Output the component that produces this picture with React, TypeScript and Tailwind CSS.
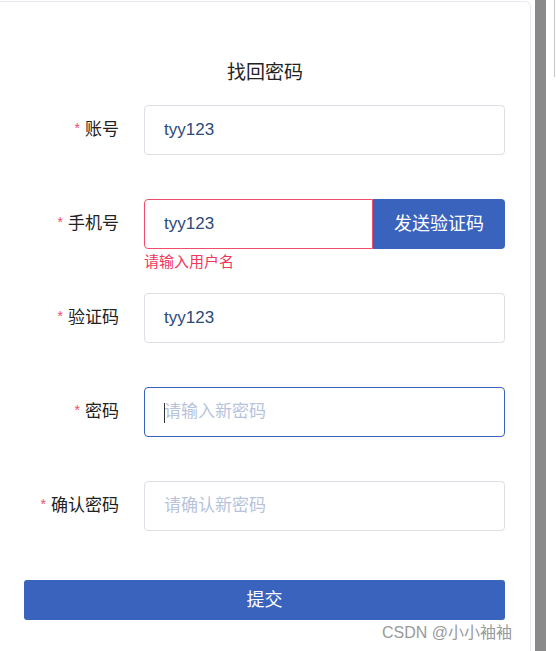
import React from 'react'

const font = { fontFamily: '"Liberation Sans", "Noto Sans CJK SC", sans-serif' }

interface FieldProps {
  label: string
  value?: string
  placeholder?: string
  state?: 'normal' | 'error' | 'focus'
  children?: React.ReactNode
  error?: string
}

const Field = ({ label, value, placeholder, state = 'normal', children, error }: FieldProps) => {
  const border =
    state === 'error' ? 'border-[#f04d6c]' : state === 'focus' ? 'border-[#3a63bd]' : 'border-[#dcdfe6]'
  return (
    <div className="flex items-start h-[94px]">
      <div className="w-[144px] h-[50px] flex items-center justify-end pr-[25px] text-[17px] text-[#222]">
        <span className="text-[#f04d6c] text-[14px] mr-[5px] -mt-[3px]">*</span>
        {label}
      </div>
      <div className="flex-1 relative">
        <div className="flex h-[50px]">
          <div className={`flex-1 relative border ${border} ${children ? 'rounded-l-[4px]' : 'rounded-[4px]'} flex items-center`}>
            {state === 'focus' && <span className="absolute left-[19px] top-[15px] w-px h-[20px] bg-[#333]" />}
            <input
              readOnly
              defaultValue={value}
              placeholder={placeholder}
              className="w-full h-full bg-transparent outline-none pl-[19px] text-[17px] text-[#2c4a7a] placeholder:text-[#b7c3dc]"
              style={font}
            />
          </div>
          {children}
        </div>
        {error && <div className="text-[15px] text-[#f0375a] mt-[3px] leading-[20px]">{error}</div>}
      </div>
    </div>
  )
}

export default function App() {
  return (
    <div className="flex w-[556px] h-[651px] bg-white overflow-hidden relative" style={font}>
      <div className="w-[531px] h-full border-t border-r border-[#e8eaf2] rounded-tr-[6px] mt-px">
        <div className="pr-[25px]">
          <div className="pt-[59px] pb-[20px] leading-[24px] text-center pl-[25px] text-[19px] text-[#222]">
            找回密码
          </div>
          <Field label="账号" value="tyy123" />
          <Field label="手机号" value="tyy123" state="error" error="请输入用户名">
            <button className="w-[132px] h-[50px] bg-[#3a63bd] text-white text-[18px] rounded-r-[4px]">发送验证码</button>
          </Field>
          <Field label="验证码" value="tyy123" />
          <Field label="密码" placeholder="请输入新密码" state="focus" />
          <Field label="确认密码" placeholder="请确认新密码" />
          <div className="pl-[24px] pt-[5px]">
            <button className="w-full h-[40px] bg-[#3a63bd] text-white text-[18px] rounded-[3px]">提交</button>
          </div>
        </div>
      </div>
      <div className="ml-[4px] w-[11px] h-full bg-[#8a8a8a]" />
      <div className="flex-1 relative">
        <div className="absolute right-[1px] top-0 w-px h-[77px] bg-[#c8c8c8]" />
      </div>
      <div className="absolute left-[382px] top-[621px] text-[16px] text-[#9a9a9a]">CSDN @小小袖袖</div>
    </div>
  )
}
